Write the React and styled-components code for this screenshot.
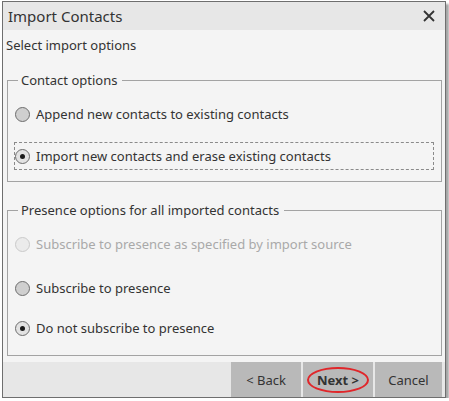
import styled, { createGlobalStyle } from 'styled-components';

const GlobalStyle = createGlobalStyle`
  body {
    margin: 0;
    background: #ffffff;
    font-family: "Noto Sans", "Open Sans", sans-serif;
  }
`

const Window = styled.div`
  box-sizing: border-box;
  width: 444px;
  height: 397px;
  margin: 1px 0 0 2px;
  border: 1px solid #6f6f6f;
  box-shadow: 3px 3px 2px rgba(0, 0, 0, 0.35);
  display: flex;
  flex-direction: column;
  background: #f4f4f4;
  color: #333333;
`

const TitleBar = styled.div`
  height: 28px;
  background: #e7e7e7;
  display: flex;
  align-items: center;
  justify-content: space-between;
  padding: 0 9px 0 5px;
  font-size: 15px;
`

const CloseButton = styled.button`
  border: none;
  background: none;
  padding: 0;
  width: 14px;
  height: 14px;
  display: flex;
  color: #333333;
  cursor: pointer;
`

const Body = styled.div`
  flex: 1;
  padding: 6px 3px 0 4px;
  display: flex;
  flex-direction: column;
  font-size: 13px;
`

const Prompt = styled.div`
  line-height: 18px;
  margin: 0 0 17px -1px;
`

const Group = styled.fieldset`
  margin: 0 0 ${props => props.$gap}px 0;
  padding: 0 7px ${props => props.$bottom}px 6px;
  border: 1px solid #a3a3a3;
  min-width: 0;
`

const Legend = styled.legend`
  line-height: 18px;
  padding: 0 5px 0 3px;
  margin-left: 4px;
`

const Row = styled.label`
  display: flex;
  align-items: center;
  gap: 6px;
  height: 28px;
  box-sizing: border-box;
  margin-top: ${props => props.$top}px;
  border: 1px dashed ${props => (props.$focus ? '#8a8a8a' : 'transparent')};
  color: ${props => (props.$disabled ? '#a9a9a9' : '#333333')};
  padding-left: 0;
`

const Radio = styled.span`
  box-sizing: border-box;
  width: 15px;
  height: 15px;
  border-radius: 50%;
  flex: none;
  border: 1px solid ${props => (props.$disabled ? '#cacaca' : '#6d6d6d')};
  background: ${props => (props.$disabled ? '#ebebeb' : props.$checked ? '#e2e2e2' : '#cfcfcf')};
  display: flex;
  align-items: center;
  justify-content: center;
  &::after {
    content: '';
    width: 5px;
    height: 5px;
    border-radius: 50%;
    background: #1a1a1a;
    display: ${props => (props.$checked ? 'block' : 'none')};
  }
`

const Footer = styled.div`
  height: 35px;
  background: #e7e7e7;
  display: flex;
  justify-content: flex-end;
  gap: 2px;
  padding-right: 3px;
`

const FooterButton = styled.button`
  width: ${props => props.$w}px;
  border: none;
  background: #b9b9b9;
  color: #333333;
  font-family: inherit;
  font-size: 13px;
  font-weight: ${props => (props.$primary ? 700 : 400)};
  display: flex;
  align-items: center;
  justify-content: center;
  padding: 0;
`

const Highlight = styled.span`
  border: 2px solid #e0262a;
  border-radius: 50%;
  width: 58px;
  height: 22px;
  display: flex;
  align-items: center;
  justify-content: center;
`

const Option = ({ label, checked, disabled, focus, top }) => (
  <Row $focus={focus} $disabled={disabled} $top={top}>
    <Radio $checked={checked} $disabled={disabled} />
    {label}
  </Row>
)

const App = () => (
  <>
    <GlobalStyle />
    <Window>
      <TitleBar>
        Import Contacts
        <CloseButton aria-label="Close">
          <svg width="14" height="14" viewBox="0 0 14 14">
            <path d="M2 2 L12 12 M12 2 L2 12" stroke="currentColor" strokeWidth="1.8" />
          </svg>
        </CloseButton>
      </TitleBar>
      <Body>
        <Prompt>Select import options</Prompt>
        <Group $gap={19} $bottom={11}>
          <Legend>Contact options</Legend>
          <Option top={11} label="Append new contacts to existing contacts" />
          <Option top={14} checked focus label="Import new contacts and erase existing contacts" />
        </Group>
        <Group $gap={6} $bottom={13}>
          <Legend>Presence options for all imported contacts</Legend>
          <Option top={11} disabled label="Subscribe to presence as specified by import source" />
          <Option top={16} label="Subscribe to presence" />
          <Option top={12} checked label="Do not subscribe to presence" />
        </Group>
      </Body>
      <Footer>
        <FooterButton $w={70}>&lt; Back</FooterButton>
        <FooterButton $w={70} $primary>
          <Highlight>Next &gt;</Highlight>
        </FooterButton>
        <FooterButton $w={67}>Cancel</FooterButton>
      </Footer>
    </Window>
  </>
)

export default App
